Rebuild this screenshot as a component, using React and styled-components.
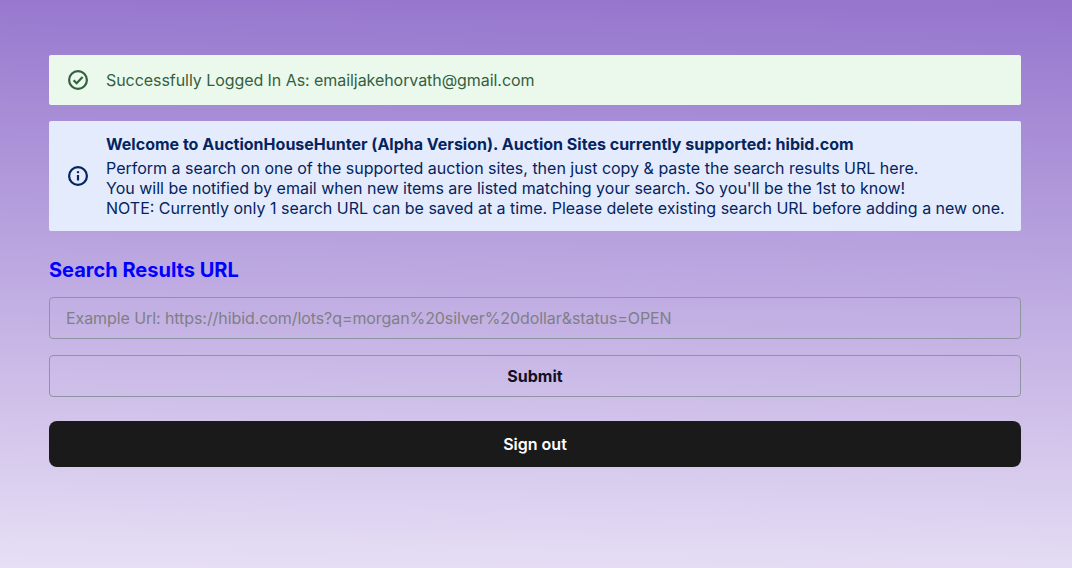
import React from "react";
import styled, { createGlobalStyle } from "styled-components";

const GlobalStyle = createGlobalStyle`
  html, body {
    margin: 0;
    padding: 0;
    height: 100%;
  }
  body {
    font-family: Inter, "Liberation Sans", sans-serif;
  }
`;

const Page = styled.main`
  box-sizing: border-box;
  height: 568px;
  padding: 55px 51px 0 49px;
  background: linear-gradient(181deg, #9575cd 0%, #e7dff5 100%);
  overflow: hidden;
`;

const Alert = styled.div`
  display: flex;
  align-items: center;
  box-sizing: border-box;
  height: ${(props) => props.$height}px;
  margin-bottom: 16px;
  padding: 0 16px 0 19px;
  border-radius: 2px;
  background: ${(props) => props.$bg};
  color: ${(props) => props.$color};
  font-size: 16px;
  line-height: 20px;
`;

const IconSlot = styled.span`
  display: flex;
  flex: none;
  width: 20px;
  height: 20px;
  margin-right: 18px;
`;

const LoggedInText = styled.span`
  letter-spacing: -0.06px;
`;

const AlertBody = styled.div`
  padding-bottom: 2px;
`;

const AlertTitle = styled.div`
  font-weight: 700;
  line-height: 22px;
  margin-bottom: 3px;
  letter-spacing: 0.01px;
`;

const Heading = styled.h2`
  margin: 27px 0 15px;
  height: 24px;
  font-size: 20px;
  line-height: 24px;
  font-weight: 700;
  color: #0000ff;
`;

const UrlInput = styled.input`
  display: block;
  box-sizing: border-box;
  width: 100%;
  height: 42px;
  margin-bottom: 16px;
  padding: 0 16px;
  border: 1px solid #8f95a0;
  border-radius: 4px;
  background: transparent;
  font-family: inherit;
  font-size: 16px;
  outline: none;
  &::placeholder {
    color: #7f7f86;
    opacity: 1;
    letter-spacing: -0.08px;
  }
`;

const SubmitButton = styled.button`
  display: block;
  box-sizing: border-box;
  width: 100%;
  height: 42px;
  margin-bottom: 24px;
  border: 1px solid #8f95a0;
  border-radius: 4px;
  background: transparent;
  color: #14101f;
  font-family: inherit;
  font-size: 16px;
  font-weight: 700;
`;

const SignOutButton = styled.button`
  display: block;
  width: 100%;
  height: 46px;
  border: none;
  border-radius: 8px;
  background: #1a1a1a;
  color: #ffffff;
  font-family: inherit;
  font-size: 16px;
  font-weight: 600;
`;

function CheckIcon() {
  return (
    <svg width="20" height="20" viewBox="0 0 20 20" fill="none" stroke="currentColor" strokeWidth="2.2">
      <circle cx="10" cy="10" r="8.9" />
      <path d="M5.6 10.3l3 3L14.6 7" />
    </svg>
  );
}

function InfoIcon() {
  return (
    <svg width="20" height="20" viewBox="0 0 20 20" fill="none" stroke="currentColor" strokeWidth="2.2">
      <circle cx="10" cy="10" r="8.9" />
      <path d="M10 9v5.5" />
      <path d="M10 5.2v2" />
    </svg>
  );
}

export default function App() {
  return (
    <Page>
      <GlobalStyle />
      <Alert $height={50} $bg="#ebf9ed" $color="#33603f">
        <IconSlot>
          <CheckIcon />
        </IconSlot>
        <LoggedInText>Successfully Logged In As: emailjakehorvath@gmail.com</LoggedInText>
      </Alert>
      <Alert $height={110} $bg="#e4ebfc" $color="#04245f">
        <IconSlot>
          <InfoIcon />
        </IconSlot>
        <AlertBody>
          <AlertTitle>Welcome to AuctionHouseHunter (Alpha Version). Auction Sites currently supported: hibid.com</AlertTitle>
          <div>Perform a search on one of the supported auction sites, then just copy &amp; paste the search results URL here.</div>
          <div>You will be notified by email when new items are listed matching your search. So you'll be the 1st to know!</div>
          <div>NOTE: Currently only 1 search URL can be saved at a time. Please delete existing search URL before adding a new one.</div>
        </AlertBody>
      </Alert>
      <Heading>Search Results URL</Heading>
      <UrlInput placeholder="Example Url: https://hibid.com/lots?q=morgan%20silver%20dollar&status=OPEN" />
      <SubmitButton>Submit</SubmitButton>
      <SignOutButton>Sign out</SignOutButton>
    </Page>
  );
}
